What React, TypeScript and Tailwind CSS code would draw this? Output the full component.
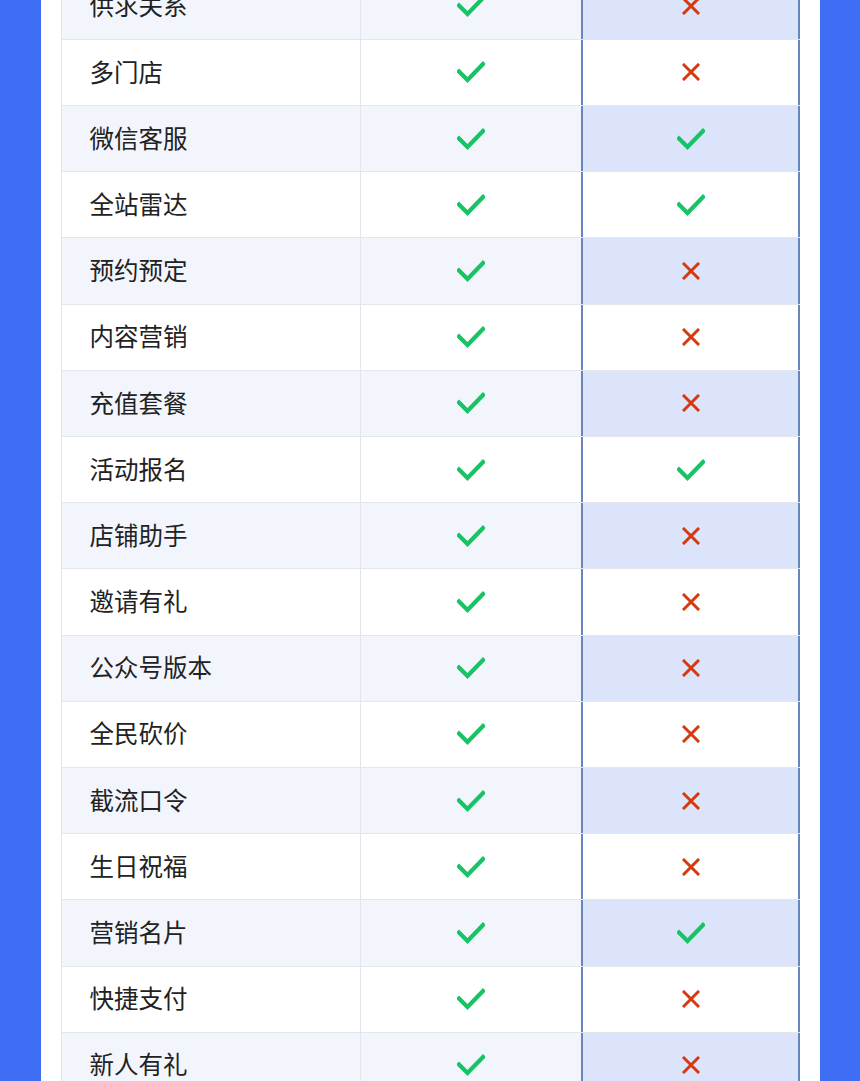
import React from "react";

const rows: [string, boolean][] = [
  ["供求关系", false],
  ["多门店", false],
  ["微信客服", true],
  ["全站雷达", true],
  ["预约预定", false],
  ["内容营销", false],
  ["充值套餐", false],
  ["活动报名", true],
  ["店铺助手", false],
  ["邀请有礼", false],
  ["公众号版本", false],
  ["全民砍价", false],
  ["截流口令", false],
  ["生日祝福", false],
  ["营销名片", true],
  ["快捷支付", false],
  ["新人有礼", false],
];

function Check() {
  return (
    <svg width="28" height="22" viewBox="0 0 28 22" fill="none">
      <path d="M2 10.5 L10.5 19 L26 3" stroke="#17c365" strokeWidth="4.2" strokeLinecap="square" strokeLinejoin="miter" />
    </svg>
  );
}

function Cross() {
  return (
    <svg width="18" height="18" viewBox="0 0 18 18" fill="none">
      <path d="M2 2 L16 16 M16 2 L2 16" stroke="#d6390e" strokeWidth="3" strokeLinecap="square" />
    </svg>
  );
}

export default function App() {
  return (
    <div className="w-[860px] h-[1081px] overflow-hidden bg-[#3e6ef4] flex justify-center" style={{ fontFamily: '"Noto Sans CJK SC", "Noto Sans", sans-serif' }}>
      <div className="w-[779px] bg-white px-[20px] overflow-hidden">
        <div className="mt-[-27.3px] flex flex-col">
          {rows.map(([name, ok], i) => {
            const odd = i % 2 === 0;
            return (
              <div key={name} className={`flex h-[66.2px] border-t border-[#e4e6ee] ${odd ? "bg-[#f3f5fd]" : "bg-white"}`}>
                <div className="w-[300px] flex items-center pl-[28px] pb-[1px] text-[24.5px] text-[#222222] border-l border-[#e4e6ee] border-r border-r-[#e3e5ea]">
                  {name}
                </div>
                <div className="w-[220px] flex items-center justify-center pl-[1px]">
                  <Check />
                </div>
                <div className={`w-[219px] flex items-center justify-center pl-[1px] border-x-2 border-[#6886bb] ${odd ? "bg-[#dbe4fb]" : "bg-white"}`}>
                  {ok ? <Check /> : <Cross />}
                </div>
              </div>
            );
          })}
        </div>
      </div>
    </div>
  );
}
